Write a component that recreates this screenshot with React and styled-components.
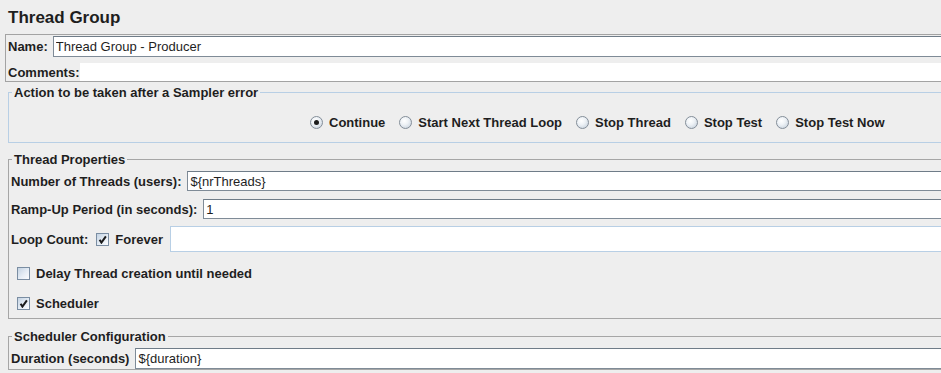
import React from "react";
import styled, { createGlobalStyle } from "styled-components";

const GlobalStyle = createGlobalStyle`
    html, body {
        margin: 0;
        background: #eeeeee;
        overflow: hidden;
    }
    body {
        font-family: "Liberation Sans", Arial, sans-serif;
        color: #1e1e1e;
    }
`;

const Page = styled.div`
    width: 1200px;
    padding-top: 8px;
`;

const Title = styled.h1`
    margin: 0 0 6px 8px;
    font-size: 17px;
    line-height: 20px;
    font-weight: bold;
`;

const NamePanel = styled.div`
    margin-left: 5px;
    border: 1px solid #a3a3a3;
    padding: 1px 0 0 2px;
    display: flex;
    flex-direction: column;
`;

const Row = styled.div`
    display: flex;
    align-items: center;
    height: ${(p) => p.$h}px;
    margin-top: ${(p) => p.$mt || 0}px;
    padding-left: ${(p) => p.$pl || 0}px;
`;

const Label = styled.span`
    font-weight: bold;
    font-size: 13px;
    white-space: nowrap;
    margin-right: ${(p) => (p.$gap == null ? 6 : p.$gap)}px;
`;

const Field = styled.input`
    flex: 1;
    min-width: 0;
    height: 100%;
    box-sizing: border-box;
    margin: 0;
    background: #ffffff;
    border: 1px solid ${(p) => (p.$light ? "#b8cfe5" : "#7f8b97")};
    border-top-color: ${(p) => (p.$light ? "#b8cfe5" : "#6f7c88")};
    border-width: ${(p) => (p.$bare ? "0" : "1px")};
    padding: 0 0 0 2px;
    font-family: "Liberation Sans", Arial, sans-serif;
    font-size: 13px;
    color: #1e1e1e;
    outline: none;
`;

const Group = styled.fieldset`
    margin: ${(p) => p.$mt}px 0 0 8px;
    padding: 0 0 ${(p) => p.$pb}px 2px;
    border: 1px solid ${(p) => (p.$blue ? "#b8cfe5" : "#a6a6a6")};
    min-width: 0;
`;

const Legend = styled.legend`
    font-weight: bold;
    font-size: 13px;
    line-height: 15px;
    padding: 0 2px;
    margin-left: 1px;
`;

const RadioRow = styled.div`
    display: flex;
    align-items: center;
    height: 20px;
    margin-top: 12px;
    padding-left: 299px;
    gap: 14px;
`;

const Option = styled.label`
    display: flex;
    align-items: center;
    gap: 6px;
    font-weight: bold;
    font-size: 13px;
    white-space: nowrap;
`;

const RadioMark = styled.span`
    width: 13px;
    height: 13px;
    box-sizing: border-box;
    border-radius: 50%;
    border: 1px solid #848e99;
    background: radial-gradient(circle at 40% 35%, #ffffff 0%, #eef2f6 40%, #bfcbd8 100%);
    display: flex;
    align-items: center;
    justify-content: center;
    &::after {
        content: "";
        width: 5px;
        height: 5px;
        border-radius: 50%;
        background: ${(p) => (p.$on ? "#1c1c1c" : "transparent")};
    }
`;

const CheckBox = styled.span`
    width: 13px;
    height: 13px;
    box-sizing: border-box;
    border: 1px solid #7a8da2;
    background: linear-gradient(135deg, #c3d2e2 0%, #e6edf5 55%, #fbfcfe 100%);
    display: flex;
    align-items: center;
    justify-content: center;
    margin-right: ${(p) => p.$mr || 6}px;
`;

const CheckText = styled.span`
    font-weight: bold;
    font-size: 13px;
    white-space: nowrap;
    margin-right: ${(p) => p.$mr || 0}px;
`;

const Tick = () => (
    <svg width="9" height="9" viewBox="0 0 9 9">
        <path d="M1.6 4.8 L3.4 7.6 L7.9 1.3" fill="none" stroke="#1c1c1c" strokeWidth="2" />
    </svg>
);

const Check = ({ on, mr }) => <CheckBox $mr={mr}>{on && <Tick />}</CheckBox>;

const actions = [
    { label: "Continue", on: true },
    { label: "Start Next Thread Loop" },
    { label: "Stop Thread" },
    { label: "Stop Test" },
    { label: "Stop Test Now" },
];

const App = () => {
    return (
        <Page>
            <GlobalStyle />
            <Title>Thread Group</Title>
            <NamePanel>
                <Row $h={21}>
                    <Label $gap={5}>Name:</Label>
                    <Field readOnly value="Thread Group - Producer" />
                </Row>
                <Row $h={18} $mt={6}>
                    <Label $gap={0}>Comments:</Label>
                    <Field $bare readOnly value="" />
                </Row>
            </NamePanel>

            <Group $blue $mt={3} $pb={10}>
                <Legend>Action to be taken after a Sampler error</Legend>
                <RadioRow>
                    {actions.map((a) => (
                        <Option key={a.label}>
                            <RadioMark $on={a.on} />
                            {a.label}
                        </Option>
                    ))}
                </RadioRow>
            </Group>

            <Group $mt={9} $pb={3}>
                <Legend>Thread Properties</Legend>
                <Row $h={20} $mt={4}>
                    <Label>Number of Threads (users):</Label>
                    <Field readOnly value="${nrThreads}" />
                </Row>
                <Row $h={20} $mt={8}>
                    <Label>Ramp-Up Period (in seconds):</Label>
                    <Field readOnly value="1" />
                </Row>
                <Row $h={26} $mt={7}>
                    <Label $gap={8}>Loop Count:</Label>
                    <Check on />
                    <CheckText $mr={7}>Forever</CheckText>
                    <Field $light readOnly value="" />
                </Row>
                <Row $h={24} $mt={9} $pl={6}>
                    <Check />
                    <CheckText>Delay Thread creation until needed</CheckText>
                </Row>
                <Row $h={24} $mt={6} $pl={6}>
                    <Check on />
                    <CheckText>Scheduler</CheckText>
                </Row>
            </Group>

            <Group $mt={10} $pb={0}>
                <Legend>Scheduler Configuration</Legend>
                <Row $h={21} $mt={4}>
                    <Label $gap={6}>Duration (seconds)</Label>
                    <Field readOnly value="${duration}" />
                </Row>
            </Group>
        </Page>
    );
};

export default App;
